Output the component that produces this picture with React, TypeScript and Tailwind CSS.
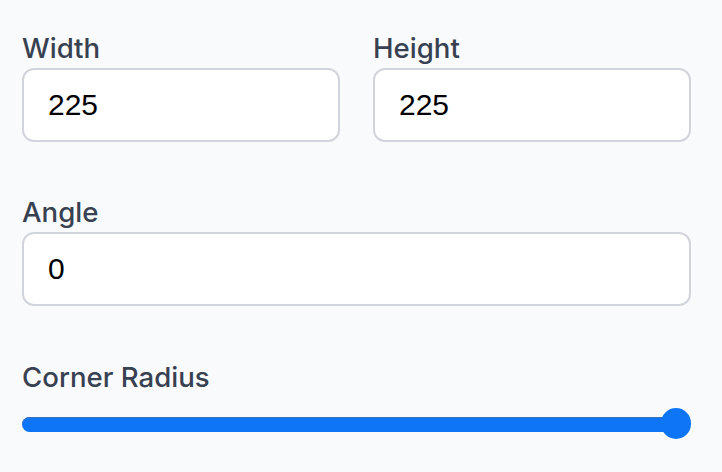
import { useState } from "react";

type FieldProps = {
	label: string;
	value: string;
};

function Field({ label, value }: FieldProps) {
	const [v, setV] = useState(value);
	return (
		<label className="flex flex-col">
			<span className="text-[27.6px] leading-[40px] font-medium text-[#374151]">{label}</span>
			<input
				type="text"
				value={v}
				onChange={(e) => setV(e.target.value)}
				className="h-[74px] w-full rounded-[12px] border-2 border-[#d1d5db] bg-white px-[24px] font-['Liberation_Sans',Arial,sans-serif] text-[30px] text-black outline-none"
			/>
		</label>
	);
}

function CornerSlider() {
	return (
		<div className="flex flex-col">
			<span className="text-[27.6px] leading-[40px] font-medium text-[#374151]">Corner Radius</span>
			<div className="relative mt-[11px] h-[32px]">
				<div className="absolute top-[8.5px] right-[14px] left-0 h-[15px] rounded-full bg-[#0e76f6] shadow-[inset_0_1px_0_#3b6fb3]" />
				<div className="absolute top-0 right-0 h-[31px] w-[30px] rounded-full bg-[#0e76f6]" />
			</div>
		</div>
	);
}

export default function App() {
	return (
		<div className="min-h-[472px] bg-[#f9fafb] pt-[28px] pl-[22px] font-['Inter',sans-serif]">
			<div className="flex w-[669px] flex-col">
				<div className="grid grid-cols-2 gap-[33px]">
					<Field label="Width" value="225" />
					<Field label="Height" value="225" />
				</div>
				<div className="mt-[50px]">
					<Field label="Angle" value="0" />
				</div>
				<div className="mt-[51px]">
					<CornerSlider />
				</div>
			</div>
		</div>
	);
}
